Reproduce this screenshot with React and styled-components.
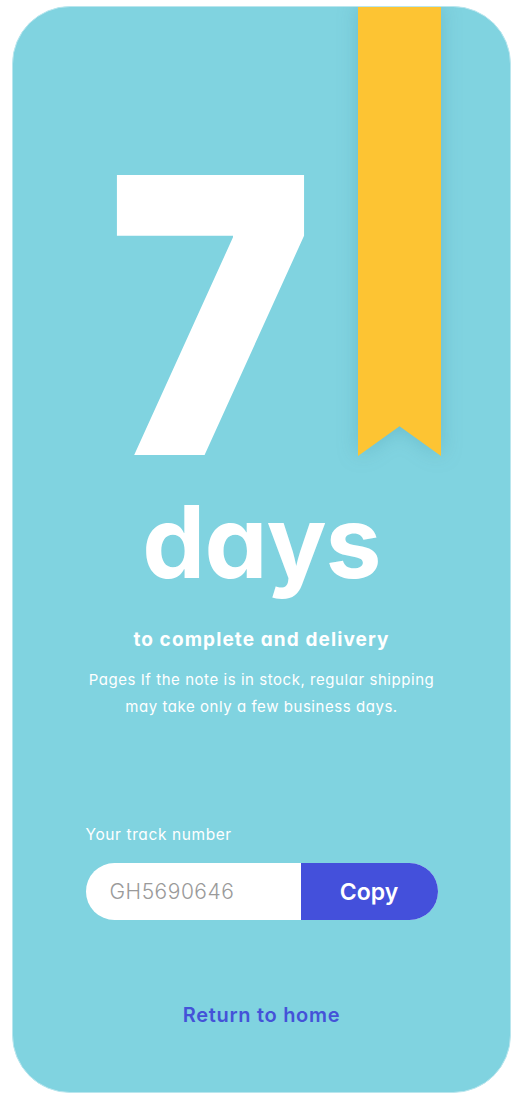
import React from "react";
import styled, { createGlobalStyle } from "styled-components";

const Global = createGlobalStyle`
  html, body { margin: 0; padding: 0; background: #ffffff; }
  body { font-family: Inter, "Noto Sans", sans-serif; font-feature-settings: "cv11" 1; }
  * { box-sizing: border-box; }
`;

const Page = styled.div`
  padding: 6px 12px 8px 12px;
`;

const Card = styled.main`
  position: relative;
  width: 499px;
  height: 1087px;
  background: #80d3e0;
  border: 1px solid #b9e6ee;
  border-radius: 58px;
  overflow: hidden;
  display: flex;
  flex-direction: column;
  align-items: center;
  padding-top: 158px;
  color: #ffffff;
`;

const RibbonWrap = styled.div`
  position: absolute;
  top: -1px;
  right: 69px;
  width: 83px;
  height: 450px;
  filter: drop-shadow(0 0 10px rgba(40, 120, 140, 0.25));
`;

const Ribbon = styled.div`
  width: 100%;
  height: 100%;
  background: #fdc433;
  clip-path: polygon(0 0, 100% 0, 100% 100%, 50% 93.4%, 0 100%);
`;

const Seven = styled.div`
  font-size: 385px;
  font-weight: 900;
  line-height: 300px;
  height: 300px;
  margin-right: 102px;
  transform: scaleX(0.9);
`;

const Days = styled.div`
  font-size: 100px;
  font-weight: 700;
  line-height: 100px;
  letter-spacing: -1px;
  margin-top: 27px;
`;

const Subtitle = styled.h2`
  margin: 36px 0 0;
  font-size: 19px;
  font-weight: 700;
  line-height: 24px;
  letter-spacing: 1.1px;
`;

const Text = styled.p`
  margin: 14px 0 0;
  width: 356px;
  text-align: center;
  font-size: 15px;
  font-weight: 400;
  line-height: 27px;
  letter-spacing: 0.55px;
`;

const Track = styled.section`
  width: 352px;
  margin-top: 105px;
  display: flex;
  flex-direction: column;
`;

const Label = styled.div`
  font-size: 15.5px;
  line-height: 20px;
  font-weight: 400;
  letter-spacing: 0.6px;
`;

const Field = styled.div`
  margin-top: 18px;
  height: 57px;
  display: flex;
  border-radius: 29px;
  overflow: hidden;
  background: #ffffff;
`;

const Code = styled.div`
  flex: 1;
  display: flex;
  align-items: center;
  padding-left: 24px;
  font-size: 21px;
  font-weight: 300;
  letter-spacing: 0.5px;
  color: #9a9a9a;
`;

const CopyBtn = styled.button`
  width: 137px;
  border: 0;
  background: #4450db;
  color: #ffffff;
  font-family: inherit;
  font-feature-settings: "cv11" 1;
  font-size: 23px;
  font-weight: 600;
  cursor: pointer;
`;

const HomeLink = styled.a`
  margin-top: 83px;
  font-size: 20px;
  line-height: 24px;
  font-weight: 600;
  letter-spacing: 0.7px;
  color: #4452d8;
  text-decoration: none;
`;

export default function App() {
  return (
    <Page>
      <Global />
      <Card>
        <RibbonWrap>
          <Ribbon />
        </RibbonWrap>
        <Seven>7</Seven>
        <Days>days</Days>
        <Subtitle>to complete and delivery</Subtitle>
        <Text>
          Pages If the note is in stock, regular shipping may take only a few business days.
        </Text>
        <Track>
          <Label>Your track number</Label>
          <Field>
            <Code>GH5690646</Code>
            <CopyBtn>Copy</CopyBtn>
          </Field>
        </Track>
        <HomeLink href="#">Return to home</HomeLink>
      </Card>
    </Page>
  );
}
